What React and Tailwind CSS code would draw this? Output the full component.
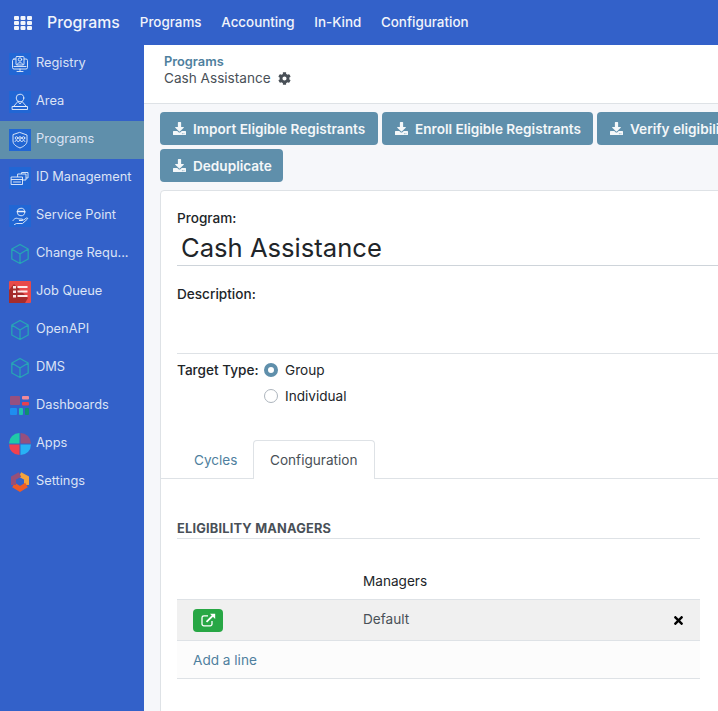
import React from "react";
import { FaDownload, FaCog, FaTimes } from "react-icons/fa";

const BlueTile = ({ children }) => (
  <svg width="22" height="22" viewBox="0 0 22 22" fill="none" stroke="#e8effb" strokeWidth="0.9" strokeLinecap="round" strokeLinejoin="round">
    <rect width="22" height="22" fill="#2166d4" stroke="none" />
    {children}
  </svg>
);

const RegistryIcon = () => (
  <BlueTile>
    <rect x="3.500" y="6" width="15" height="10" rx="1.500" />
    <rect x="7" y="3.500" width="8" height="8.500" rx="1" fill="#2166d4" />
    <circle cx="11" cy="6.500" r="1.700" />
    <path d="M8 11.500c.5-2.500 5.500-2.500 6 0M5 13.500h12M11 16v2M8 18.500h6" />
  </BlueTile>
);

const AreaIcon = () => (
  <BlueTile>
    <circle cx="11" cy="7" r="3.800" />
    <path d="M9 10.500c.5 1 1 1.500 2 2.500 1-1 1.500-1.500 2-2.500" />
    <path d="M8.500 11 4.500 15.500h13L13.500 11M3.500 15.500h15v3h-15z" />
  </BlueTile>
);

const ProgramsIcon = () => (
  <BlueTile>
    <path d="M11 3.500 18 6v6c0 3.500-3.500 5.500-7 7-3.500-1.500-7-3.500-7-7V6z" />
    <circle cx="7.500" cy="9" r="1.300" />
    <circle cx="11" cy="9" r="1.300" />
    <circle cx="14.500" cy="9" r="1.300" />
    <path d="M6 12.500c.3-1.500 2.700-1.500 3 0M9.500 12.500c.3-1.500 2.700-1.500 3 0M13 12.500c.3-1.500 2.700-1.500 3 0" />
  </BlueTile>
);

const IdIcon = () => (
  <BlueTile>
    <rect x="13" y="5.500" width="6" height="5.500" />
    <rect x="9" y="7" width="8" height="6" fill="#2166d4" />
    <rect x="2.500" y="10" width="11" height="7.500" fill="#2166d4" />
    <path d="M2.500 12.500h11M4.500 15h7" />
  </BlueTile>
);

const ServiceIcon = () => (
  <BlueTile>
    <circle cx="12" cy="7" r="3.800" />
    <path d="M8.500 6.500h7" strokeWidth="1.600" />
    <path d="M4 15.500c2-3 4-2.500 6-1.500h3c1 0 1 1.500 0 1.500h-3l4.500-.5 3-2c1-.5 1.500.5.800 1.200L13.500 18.500H7.500L5.500 19.500" />
  </BlueTile>
);

const CubeIcon = () => (
  <svg width="20" height="22" viewBox="0 0 22 24" fill="none" stroke="#27a5b5" strokeWidth="1.400" strokeLinejoin="round">
    <path d="M11 1.500 20 6.500v11L11 22.500 2 17.500v-11zM2 6.500 11 12l9-5.500M11 12v10.500" />
  </svg>
);

const JobIcon = () => (
  <svg width="22" height="22" viewBox="0 0 22 22">
    <rect width="22" height="22" rx="1" fill="#e84a4a" />
    <path d="M0 22V9L5 3 19 17l-3 5z" fill="#a52c2c" />
    <g fill="#fbeaea">
      <rect x="4" y="5" width="3" height="2.500" />
      <rect x="4" y="9.500" width="3" height="2.500" />
      <rect x="4" y="14" width="3" height="2.500" />
      <rect x="8.500" y="5" width="10" height="2" />
      <rect x="8.500" y="9.500" width="10" height="2" />
      <rect x="8.500" y="14" width="10" height="2" />
    </g>
  </svg>
);

const DashboardsIcon = () => (
  <svg width="20" height="20" viewBox="0 0 20 20">
    <rect x="0" y="0" width="10" height="9" rx="1" fill="#96507f" />
    <rect x="12" y="0" width="7" height="3.500" rx="1" fill="#f08a98" />
    <rect x="12" y="6" width="7" height="3.500" rx="1" fill="#e8404f" />
    <rect x="0" y="12" width="7" height="7" rx="1" fill="#1e8df0" />
    <rect x="9" y="12" width="4" height="7" rx="1" fill="#1fc2ae" />
    <rect x="15" y="12" width="4" height="7" rx="1" fill="#0e8f6f" />
  </svg>
);

const AppsIcon = () => (
  <svg width="22" height="22" viewBox="0 0 22 22">
    <path d="M10.500 10.500V0A10.500 10.500 0 0 0 0 10.500z" fill="#1fcaa8" />
    <path d="M11.500 10.500V0A10.500 10.500 0 0 1 22 10.500z" fill="#96507f" />
    <path d="M10.500 11.500V22A10.500 10.500 0 0 1 0 11.500z" fill="#f0414f" />
    <path d="M11.500 11.500V22A10.500 10.500 0 0 0 22 11.500z" fill="#28b2f5" />
  </svg>
);

const SettingsIcon = () => (
  <svg width="20" height="20" viewBox="0 0 20 20" fill="none" strokeWidth="5">
    <path d="M10 2.500 16.500 6v7" stroke="#f3a33b" />
    <path d="M16.500 13 10 17 3.500 13" stroke="#ee5b26" />
    <path d="M3.500 13V6L10 2.500" stroke="#965079" />
  </svg>
);

const OpenIcon = () => (
  <svg width="15" height="14" viewBox="0 0 15 14" fill="none" stroke="#fff" strokeWidth="1.300">
    <path d="M11 8v3a1.800 1.800 0 0 1-1.800 1.800H2.800A1.800 1.800 0 0 1 1 11V4.700a1.800 1.800 0 0 1 1.800-1.800H7" />
    <path d="M5.500 8.800 12.500 2" strokeWidth="1.800" />
    <path d="M9 .800h5.200V6z" fill="#fff" stroke="none" />
  </svg>
);

const menu = [
  { name: "Registry", icon: <RegistryIcon /> },
  { name: "Area", icon: <AreaIcon /> },
  { name: "Programs", icon: <ProgramsIcon />, active: true },
  { name: "ID Management", icon: <IdIcon /> },
  { name: "Service Point", icon: <ServiceIcon /> },
  { name: "Change Requ...", icon: <CubeIcon /> },
  { name: "Job Queue", icon: <JobIcon /> },
  { name: "OpenAPI", icon: <CubeIcon /> },
  { name: "DMS", icon: <CubeIcon /> },
  { name: "Dashboards", icon: <DashboardsIcon /> },
  { name: "Apps", icon: <AppsIcon /> },
  { name: "Settings", icon: <SettingsIcon /> },
];

const ActionButton = ({ label, className }) => (
  <button className={`flex h-[33px] shrink-0 items-center gap-[6px] whitespace-nowrap rounded-[4px] bg-[#5f8fab] px-[13px] text-[13.600px] font-semibold text-[#f4f7f9] ${className || ""}`}>
    <FaDownload className="shrink-0 text-[13px]" />
    <span className="pl-[1px] pt-[2px]">{label}</span>
  </button>
);

export default function App() {
  return (
    <div className="flex h-[711px] w-[718px] flex-col overflow-hidden bg-[#f6f7fa] font-['Inter',sans-serif] text-[13.600px] text-[#212529]">
      <header className="flex h-[45px] shrink-0 items-center bg-[#3361c9] text-[#f1f4fb]">
        <svg width="18" height="14" viewBox="0 0 18 14" fill="#f1f4fb" className="ml-[14px]">
          <rect x="0" y="0" width="5" height="4" rx="1" />
          <rect x="6.500" y="0" width="5" height="4" rx="1" />
          <rect x="13" y="0" width="5" height="4" rx="1" />
          <rect x="0" y="5" width="5" height="4" rx="1" />
          <rect x="6.500" y="5" width="5" height="4" rx="1" />
          <rect x="13" y="5" width="5" height="4" rx="1" />
          <rect x="0" y="10" width="5" height="4" rx="1" />
          <rect x="6.500" y="10" width="5" height="4" rx="1" />
          <rect x="13" y="10" width="5" height="4" rx="1" />
        </svg>
        <span className="ml-[15px] text-[15.800px] font-medium">Programs</span>
        <nav className="ml-[20px] flex gap-[19.700px] text-[13.400px] font-medium">
          <span>Programs</span>
          <span>Accounting</span>
          <span>In-Kind</span>
          <span>Configuration</span>
        </nav>
      </header>
      <div className="flex min-h-0 flex-1">
        <aside className="w-[144px] shrink-0 bg-[#3361c9] text-[12.800px] text-[#dbe3f5]">
          {menu.map((item) => (
            <div key={item.name} className={`flex h-[38px] items-center pl-[9px] ${item.active ? "bg-[#5f8fab]" : ""}`}>
              <span className="flex w-[22px] shrink-0 items-center justify-center">{item.icon}</span>
              <span className="mb-[2px] ml-[5px] whitespace-nowrap">{item.name}</span>
            </div>
          ))}
        </aside>
        <main className="min-w-0 flex-1">
          <div className="h-[59px] border-b border-[#dee2e6] bg-white pl-[20px] pt-[8px]">
            <div className="text-[12.800px] leading-[17px] font-semibold text-[#4f7f9e]">Programs</div>
            <div className="flex items-center gap-[7px] text-[13.600px] leading-[16px] text-[#495057]">
              Cash Assistance
              <FaCog className="text-[13px]" />
            </div>
          </div>
          <div className="flex w-[620px] flex-wrap gap-[4px] pl-[16px] pt-[8px]">
            <ActionButton label="Import Eligible Registrants" className="w-[218px]" />
            <ActionButton label="Enroll Eligible Registrants" className="w-[211px]" />
            <ActionButton label="Verify eligibility" className="w-[160px]" />
            <ActionButton label="Deduplicate" className="w-[123px]" />
          </div>
          <section className="ml-[16px] mt-[8px] h-[600px] w-[640px] rounded-t-[4px] border border-[#dee2e6] bg-white">
            <div className="pl-[16px] pt-[19px]">
              <div className="font-medium leading-[17px]">Program:</div>
              <div className="mt-[4px] border-b border-[#ced4da] pl-[4px] text-[25.600px] leading-[34px]">Cash Assistance</div>
              <div className="mt-[20px] font-medium leading-[17px]">Description:</div>
              <div className="h-[51px] border-b border-[#dee2e6]" />
              <div className="mt-[7px] flex">
                <span className="w-[87px] pt-[1px] font-medium leading-[17px]">Target Type:</span>
                <div className="flex flex-col gap-[8px] leading-[17px]">
                  <label className="flex items-center gap-[7px]">
                    <span className="-mt-[1px] h-[14px] w-[14px] rounded-full border-[4px] border-[#5f8fab] bg-white" />
                    <span className="pt-[1px]">Group</span>
                  </label>
                  <label className="flex items-center gap-[7px]">
                    <span className="-mt-[1px] h-[14px] w-[14px] rounded-full border border-[#adb5bd] bg-white" />
                    <span className="pt-[1px]">Individual</span>
                  </label>
                </div>
              </div>
            </div>
            <div className="mt-[35px] flex h-[39px] border-b border-[#dee2e6] pl-[16px]">
              <span className="w-[76px] pl-[17px] pt-[12px] leading-[17px] text-[#4f7f9e]">Cycles</span>
              <span className="-mb-px w-[122px] rounded-t-[4px] border border-b-0 border-[#dee2e6] bg-white pl-[16px] pt-[11px] leading-[17px] text-[#495057]">Configuration</span>
            </div>
            <div className="w-[539px] pl-[16px] pt-[42px]">
              <h3 className="border-b border-[#dee2e6] pb-[2px] text-[12.800px] leading-[15px] font-bold tracking-[0.2px] text-[#495057]">ELIGIBILITY MANAGERS</h3>
              <div className="flex h-[61px] items-end border-b border-[#dee2e6] pb-[9px] pl-[186px] leading-[17px]">Managers</div>
              <div className="flex h-[41px] items-center border-b border-[#dee2e6] bg-[#f0f0f0] pl-[16px] pr-[15px]">
                <span className="flex h-[23px] w-[30px] items-center justify-center rounded-[4px] bg-[#28a745]">
                  <OpenIcon />
                </span>
                <span className="mb-[2px] ml-[140px] flex-1 text-[#495057]">Default</span>
                <FaTimes className="text-[13px] text-black" />
              </div>
              <div className="flex h-[38px] items-center border-b border-[#dee2e6] bg-[#fcfcfc] pl-[16px] pt-[2px] text-[#4f7f9e]">Add a line</div>
            </div>
          </section>
        </main>
      </div>
    </div>
  );
}
